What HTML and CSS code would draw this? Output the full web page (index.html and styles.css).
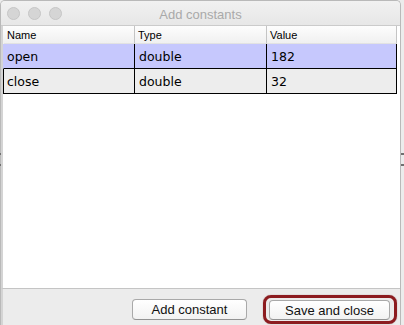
FILE: index.html
```html
<!DOCTYPE html>
<html lang="en">

<head>
    <meta charset="UTF-8">
    <meta name="viewport" content="width=device-width, initial-scale=1.0">
    <title>Add constants</title>
    <link rel="stylesheet" href="styles.css">
</head>

<body>
    <div class="window">
        <div class="titlebar">
            <div class="lights">
                <span class="light"></span>
                <span class="light"></span>
                <span class="light"></span>
            </div>
            <div class="title">Add constants</div>
            <div></div>
        </div>
        <div class="content">
            <table class="grid">
                <thead>
                    <tr>
                        <th class="col-name">Name</th>
                        <th class="col-type">Type</th>
                        <th class="col-value">Value</th>
                    </tr>
                </thead>
                <tbody>
                    <tr class="selected">
                        <td>open</td>
                        <td>double</td>
                        <td>182</td>
                    </tr>
                    <tr>
                        <td>close</td>
                        <td>double</td>
                        <td>32</td>
                    </tr>
                </tbody>
            </table>
        </div>
        <div class="footer">
            <button type="button" class="button add">Add constant</button>
            <span class="highlight">
                <button type="button" class="button save">Save and close</button>
            </span>
        </div>
    </div>
    <span class="notch left top"></span>
    <span class="notch left bottom"></span>
    <span class="notch right top"></span>
    <span class="notch right bottom"></span>
</body>

</html>
```

FILE: styles.css
```css
body {
    margin: 0;
    padding: 0;
    width: 404px;
    height: 325px;
    overflow: hidden;
    position: relative;
    background-color: #ececec;
    font-family: 'Liberation Sans', Arial, sans-serif;
    color: #000;
}

.window {
    width: 399px;
    height: 324px;
    border: 1px solid #b9b9b9;
    border-bottom: none;
    border-radius: 5px 5px 0 0;
    display: flex;
    flex-direction: column;
    overflow: hidden;
    background: #ececec;
}

.titlebar {
    height: 24px;
    flex: none;
    display: grid;
    grid-template-columns: 1fr auto 1fr;
    align-items: center;
    background: linear-gradient(#f1f1f1, #e7e7e7);
    border-bottom: 1px solid #cbcbcb;
}

.lights {
    display: flex;
    gap: 8px;
    padding-left: 6px;
    padding-top: 1px;
}

.light {
    width: 11px;
    height: 11px;
    border-radius: 50%;
    background: #d5d5d5;
    border: 1px solid #c6c6c6;
}

.title {
    font-size: 13px;
    color: #a9a9a9;
    padding-top: 2px;
}

.content {
    flex: none;
    height: 262px;
    background: #fff;
    border-left: 2px solid #d4d4d4;
    border-bottom: 1px solid #c4c4c4;
}

.grid {
    width: 394px;
    table-layout: fixed;
    border-collapse: separate;
    border-spacing: 0;
}

.grid th,
.grid td {
    box-sizing: border-box;
    padding: 0 4px 0 3px;
    text-align: left;
    white-space: nowrap;
}

.grid th {
    height: 18px;
    font-size: 11px;
    font-weight: normal;
    background: linear-gradient(#fdfdfd, #f0f0f0);
    border-bottom: 1px solid #e2e2e2;
    border-right: 1px solid #c4c4c4;
    border-left: 1px solid transparent;
}

.grid th + th {
    border-left: none;
}

.col-name {
    width: 132px;
}

.col-type {
    width: 132px;
    padding-left: 4px;
}

.col-value {
    width: 130px;
}

.grid td {
    height: 25px;
    font-family: 'DejaVu Sans', Verdana, sans-serif;
    font-size: 12.5px;
    background: #ededed;
    border-right: 1px solid #000;
    border-bottom: 1px solid #000;
}

.grid td:first-child {
    border-left: 1px solid #000;
}

.grid td + td {
    padding-left: 4px;
}

.grid .selected td {
    background: #c6c8fd;
}

.grid .selected td:first-child {
    border-left-color: #c6c8fd;
}

.footer {
    flex: 1;
    display: flex;
    justify-content: flex-end;
    align-items: flex-start;
    gap: 16px;
    padding-right: 3px;
    border-left: 2px solid #d4d4d4;
}

.button {
    font-family: 'Liberation Sans', Arial, sans-serif;
    font-size: 13px;
    color: #111;
    height: 21px;
    padding: 0;
    background: linear-gradient(#ffffff, #f2f2f2);
    border: 1px solid #a9a9a9;
    border-bottom-color: #939393;
    border-radius: 4px;
}

.add {
    width: 115px;
    margin-top: 10px;
}

.highlight {
    display: flex;
    margin-top: 6px;
    padding: 2px 4px 1px 3px;
    border: 3px solid #8c1c20;
    border-radius: 8px;
    box-shadow: 0 0 1px rgba(80, 0, 0, 0.6);
}

.save {
    width: 121px;
    height: 20px;
}

.notch {
    position: absolute;
    height: 2px;
    background: #707070;
}

.notch.left {
    left: 0;
    width: 1px;
}

.notch.right {
    left: 401px;
    width: 3px;
}

.notch.top {
    top: 153px;
}

.notch.bottom {
    top: 164px;
}
```
